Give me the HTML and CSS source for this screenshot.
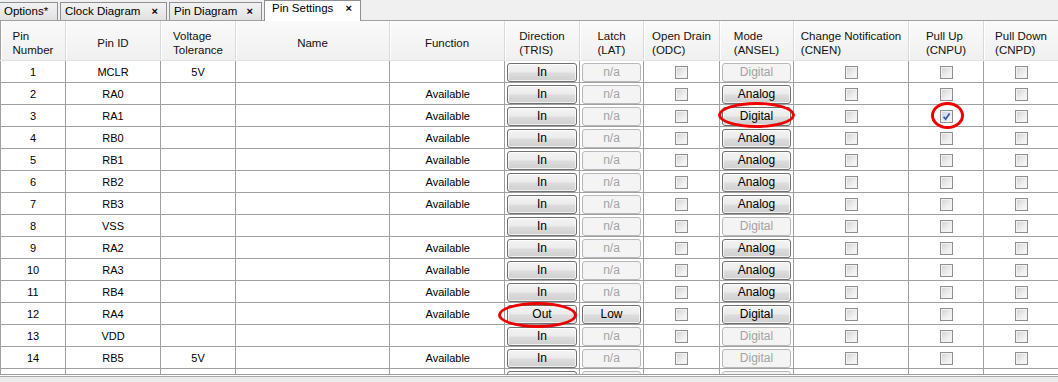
FILE: index.html
```html
<!DOCTYPE html>
<html>
<head>
<meta charset="utf-8">
<link rel="stylesheet" href="styles.css">
</head>
<body>
<div class="tabbar">
  <div class="tab t-options">Options*</div>
  <div class="tab t-clock">Clock Diagram<span class="x">×</span></div>
  <div class="tab t-pindia">Pin Diagram<span class="x">×</span></div>
  <div class="tab active t-pinset">Pin Settings<span class="x">×</span></div>
</div>
<div class="head row-h">
  <div class="hc"><span class="hl">Pin<br>Number</span></div>
  <div class="hc"><span class="hl">Pin ID</span></div>
  <div class="hc"><span class="hl">Voltage<br>Tolerance</span></div>
  <div class="hc"><span class="hl">Name</span></div>
  <div class="hc"><span class="hl">Function</span></div>
  <div class="hc"><span class="hl">Direction<br>(TRIS)</span></div>
  <div class="hc"><span class="hl">Latch<br>(LAT)</span></div>
  <div class="hc"><span class="hl">Open Drain<br>(ODC)</span></div>
  <div class="hc"><span class="hl">Mode<br>(ANSEL)</span></div>
  <div class="hc"><span class="hl">Change Notification<br>(CNEN)</span></div>
  <div class="hc"><span class="hl">Pull Up<br>(CNPU)</span></div>
  <div class="hc"><span class="hl">Pull Down<br>(CNPD)</span></div>
</div>
<div class="body">
  <div class="row">
    <div class="c">1</div><div class="c">MCLR</div><div class="c">5V</div><div class="c"></div><div class="c fn"></div>
    <div class="c"><span class="btn">In</span></div><div class="c"><span class="btn dis">n/a</span></div>
    <div class="c"><span class="cb"></span></div><div class="c"><span class="btn dis">Digital</span></div>
    <div class="c"><span class="cb"></span></div><div class="c"><span class="cb"></span></div><div class="c"><span class="cb"></span></div>
  </div>
  <div class="row">
    <div class="c">2</div><div class="c">RA0</div><div class="c"></div><div class="c"></div><div class="c fn">Available</div>
    <div class="c"><span class="btn">In</span></div><div class="c"><span class="btn dis">n/a</span></div>
    <div class="c"><span class="cb"></span></div><div class="c"><span class="btn">Analog</span></div>
    <div class="c"><span class="cb"></span></div><div class="c"><span class="cb"></span></div><div class="c"><span class="cb"></span></div>
  </div>
  <div class="row">
    <div class="c">3</div><div class="c">RA1</div><div class="c"></div><div class="c"></div><div class="c fn">Available</div>
    <div class="c"><span class="btn">In</span></div><div class="c"><span class="btn dis">n/a</span></div>
    <div class="c"><span class="cb"></span></div><div class="c anno"><span class="btn">Digital</span><span class="ring ring-mode"></span></div>
    <div class="c"><span class="cb"></span></div>
    <div class="c anno"><span class="cb on"><svg viewBox="0 0 13 13" width="13" height="13"><path d="M3.6 6.8 L5.6 9.2 L9.6 3.4" fill="none" stroke="#3653a8" stroke-width="1.7"/></svg></span><span class="ring ring-pu"></span></div>
    <div class="c"><span class="cb"></span></div>
  </div>
  <div class="row">
    <div class="c">4</div><div class="c">RB0</div><div class="c"></div><div class="c"></div><div class="c fn">Available</div>
    <div class="c"><span class="btn">In</span></div><div class="c"><span class="btn dis">n/a</span></div>
    <div class="c"><span class="cb"></span></div><div class="c"><span class="btn">Analog</span></div>
    <div class="c"><span class="cb"></span></div><div class="c"><span class="cb"></span></div><div class="c"><span class="cb"></span></div>
  </div>
  <div class="row">
    <div class="c">5</div><div class="c">RB1</div><div class="c"></div><div class="c"></div><div class="c fn">Available</div>
    <div class="c"><span class="btn">In</span></div><div class="c"><span class="btn dis">n/a</span></div>
    <div class="c"><span class="cb"></span></div><div class="c"><span class="btn">Analog</span></div>
    <div class="c"><span class="cb"></span></div><div class="c"><span class="cb"></span></div><div class="c"><span class="cb"></span></div>
  </div>
  <div class="row">
    <div class="c">6</div><div class="c">RB2</div><div class="c"></div><div class="c"></div><div class="c fn">Available</div>
    <div class="c"><span class="btn">In</span></div><div class="c"><span class="btn dis">n/a</span></div>
    <div class="c"><span class="cb"></span></div><div class="c"><span class="btn">Analog</span></div>
    <div class="c"><span class="cb"></span></div><div class="c"><span class="cb"></span></div><div class="c"><span class="cb"></span></div>
  </div>
  <div class="row">
    <div class="c">7</div><div class="c">RB3</div><div class="c"></div><div class="c"></div><div class="c fn">Available</div>
    <div class="c"><span class="btn">In</span></div><div class="c"><span class="btn dis">n/a</span></div>
    <div class="c"><span class="cb"></span></div><div class="c"><span class="btn">Analog</span></div>
    <div class="c"><span class="cb"></span></div><div class="c"><span class="cb"></span></div><div class="c"><span class="cb"></span></div>
  </div>
  <div class="row">
    <div class="c">8</div><div class="c">VSS</div><div class="c"></div><div class="c"></div><div class="c fn"></div>
    <div class="c"><span class="btn">In</span></div><div class="c"><span class="btn dis">n/a</span></div>
    <div class="c"><span class="cb"></span></div><div class="c"><span class="btn dis">Digital</span></div>
    <div class="c"><span class="cb"></span></div><div class="c"><span class="cb"></span></div><div class="c"><span class="cb"></span></div>
  </div>
  <div class="row">
    <div class="c">9</div><div class="c">RA2</div><div class="c"></div><div class="c"></div><div class="c fn">Available</div>
    <div class="c"><span class="btn">In</span></div><div class="c"><span class="btn dis">n/a</span></div>
    <div class="c"><span class="cb"></span></div><div class="c"><span class="btn">Analog</span></div>
    <div class="c"><span class="cb"></span></div><div class="c"><span class="cb"></span></div><div class="c"><span class="cb"></span></div>
  </div>
  <div class="row">
    <div class="c">10</div><div class="c">RA3</div><div class="c"></div><div class="c"></div><div class="c fn">Available</div>
    <div class="c"><span class="btn">In</span></div><div class="c"><span class="btn dis">n/a</span></div>
    <div class="c"><span class="cb"></span></div><div class="c"><span class="btn">Analog</span></div>
    <div class="c"><span class="cb"></span></div><div class="c"><span class="cb"></span></div><div class="c"><span class="cb"></span></div>
  </div>
  <div class="row">
    <div class="c">11</div><div class="c">RB4</div><div class="c"></div><div class="c"></div><div class="c fn">Available</div>
    <div class="c"><span class="btn">In</span></div><div class="c"><span class="btn dis">n/a</span></div>
    <div class="c"><span class="cb"></span></div><div class="c"><span class="btn">Analog</span></div>
    <div class="c"><span class="cb"></span></div><div class="c"><span class="cb"></span></div><div class="c"><span class="cb"></span></div>
  </div>
  <div class="row">
    <div class="c">12</div><div class="c">RA4</div><div class="c"></div><div class="c"></div><div class="c fn">Available</div>
    <div class="c anno"><span class="btn">Out</span><span class="ring ring-out"></span></div><div class="c"><span class="btn">Low</span></div>
    <div class="c"><span class="cb"></span></div><div class="c"><span class="btn">Digital</span></div>
    <div class="c"><span class="cb"></span></div><div class="c"><span class="cb"></span></div><div class="c"><span class="cb"></span></div>
  </div>
  <div class="row">
    <div class="c">13</div><div class="c">VDD</div><div class="c"></div><div class="c"></div><div class="c fn"></div>
    <div class="c"><span class="btn">In</span></div><div class="c"><span class="btn dis">n/a</span></div>
    <div class="c"><span class="cb"></span></div><div class="c"><span class="btn dis">Digital</span></div>
    <div class="c"><span class="cb"></span></div><div class="c"><span class="cb"></span></div><div class="c"><span class="cb"></span></div>
  </div>
  <div class="row">
    <div class="c">14</div><div class="c">RB5</div><div class="c">5V</div><div class="c"></div><div class="c fn">Available</div>
    <div class="c"><span class="btn">In</span></div><div class="c"><span class="btn dis">n/a</span></div>
    <div class="c"><span class="cb"></span></div><div class="c"><span class="btn dis">Digital</span></div>
    <div class="c"><span class="cb"></span></div><div class="c"><span class="cb"></span></div><div class="c"><span class="cb"></span></div>
  </div>
  <div class="row">
    <div class="c"></div><div class="c"></div><div class="c"></div><div class="c"></div><div class="c fn"></div>
    <div class="c"><span class="btn"></span></div><div class="c"><span class="btn dis"></span></div>
    <div class="c"><span class="cb"></span></div><div class="c"><span class="btn dis"></span></div>
    <div class="c"><span class="cb"></span></div><div class="c"><span class="cb"></span></div><div class="c"><span class="cb"></span></div>
  </div>
</div>
<div class="footer"></div>
</body>
</html>
```
FILE: styles.css
```css
html, body {
  margin: 0;
  padding: 0;
}
body {
  width: 1058px;
  height: 382px;
  overflow: hidden;
  background: #ffffff;
  font-family: "Liberation Sans", Arial, sans-serif;
  color: #000;
}

/* tabs */
.tabbar {
  height: 20px;
  border-bottom: 1px solid #a0a0a0;
  background: #f0f0f0;
  display: flex;
  align-items: flex-end;
  gap: 2px;
}
.tab {
  box-sizing: border-box;
  height: 18px;
  border: 1px solid #8e8f95;
  border-bottom: none;
  background: linear-gradient(#f2f2f2, #e1e1e1);
  font-size: 11.5px;
  line-height: 17px;
  padding: 0 5px 0 4px;
  display: flex;
  justify-content: space-between;
  white-space: nowrap;
}
.t-options { width: 58px; border-left: none; }
.t-clock { width: 107px; }
.t-pindia { width: 93px; }
.t-pinset { width: 97px; }
.tab.active {
  background: #ffffff;
  line-height: 14px;
  padding-left: 7px;
  margin-bottom: -1px;
  height: 21px;
}
.x {
  font-weight: bold;
  font-size: 11px;
  padding-right: 3px;
}

/* grid rows */
.row-h, .row {
  display: grid;
  grid-template-columns: 65px 95px 75px 154px 115px 75px 64px 76px 74px 115px 75px 75px;
}
.head {
  height: 40px;
  background: linear-gradient(#fafafa, #f0f0f0);
  border-bottom: 1px solid #e2e2e2;
  box-sizing: border-box;
}
.hc {
  box-sizing: border-box;
  border-left: 1px solid #d9d9d9;
  box-shadow: inset 1px 0 0 #ffffff;
  display: flex;
  align-items: center;
  justify-content: center;
  padding-top: 4px;
  font-size: 11.5px;
  line-height: 14px;
  color: #111;
}
.hc:first-child { border-left-color: #a0a0a0; }
.hl {
  display: inline-block;
  text-align: left;
  white-space: nowrap;
}

.body {
  height: 313px;
  overflow: hidden;
}
.row { height: 22px; }
.c {
  box-sizing: border-box;
  border-left: 1px solid #a0a0a0;
  border-bottom: 1px solid #a0a0a0;
  padding-top: 1px;
  display: flex;
  align-items: center;
  justify-content: center;
  font-size: 11px;
  white-space: nowrap;
}
.c.fn {
  justify-content: flex-end;
  padding-right: 34px;
}
.anno { position: relative; }

/* buttons */
.btn {
  box-sizing: border-box;
  width: calc(100% - 4px);
  height: 19px;
  border: 1px solid #707070;
  border-radius: 3px;
  background: linear-gradient(#f4f4f4 0%, #ebebeb 48%, #dddddd 52%, #cfcfcf 100%);
  box-shadow: inset 0 0 0 1px rgba(255, 255, 255, 0.7);
  display: flex;
  align-items: center;
  justify-content: center;
  font-size: 12px;
  color: #000;
}
.btn.dis {
  border-color: #b8b8b8;
  background: #f4f4f4;
  box-shadow: none;
  color: #a3a3a3;
}

/* checkboxes */
.cb {
  box-sizing: border-box;
  width: 13px;
  height: 13px;
  border: 1px solid #8f8f8f;
  background: linear-gradient(135deg, #cfd0d2 0%, #eeeeee 60%, #fbfbfb 100%);
  box-shadow: inset 0 0 0 1px #f2f2f2;
  display: block;
  position: relative;
}
.cb.on {
  background: linear-gradient(135deg, #c9d0e2 0%, #e6eaf4 60%, #f6f8fc 100%);
}
.cb svg {
  position: absolute;
  left: -1px;
  top: -1px;
}

/* red annotation rings */
.ring {
  position: absolute;
  box-sizing: border-box;
  border: 3px solid #ee0000;
  border-radius: 50%;
  pointer-events: none;
}
.ring-mode { left: -2px; top: -3px; width: 77px; height: 26px; }
.ring-pu { left: 22px; top: -3px; width: 33px; height: 27px; }
.ring-out { left: -7px; top: -1px; width: 79px; height: 26px; }

.footer {
  height: 8px;
  box-sizing: border-box;
  border-top: 1px solid #9c9c9c;
  background: linear-gradient(#ffffff 0, #ffffff 1px, #a8a8a8 1px, #a8a8a8 2px, #ececec 2px, #ececec 100%);
}
```
